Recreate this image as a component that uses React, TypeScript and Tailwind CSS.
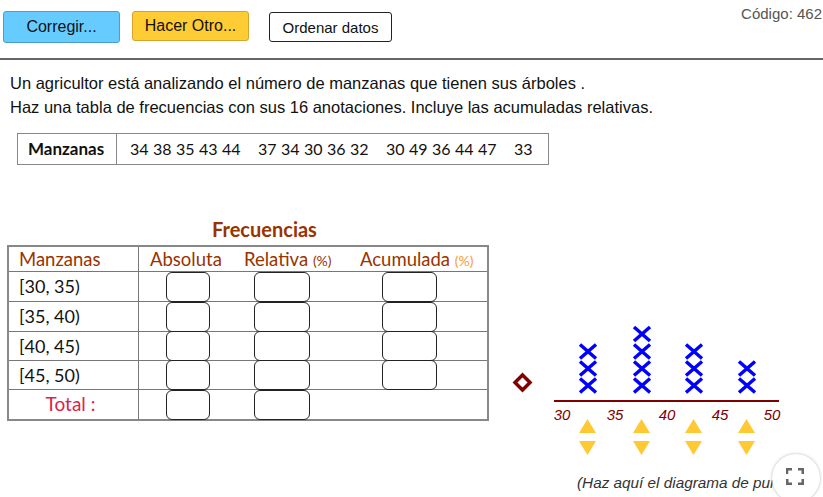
import React from "react";

const Box = ({ w }: { w: string }) => (
  <div className={`${w} h-[30px] shrink-0 rounded-[6px] border-[1.5px] border-[#222] bg-white`} />
);

const rows = ["[30, 35)", "[35, 40)", "[40, 45)", "[45, 50)"];
const rowH = ["h-[30px]", "h-[30px]", "h-[29px]", "h-[29px]"];

const groups = [
  ["34", "38", "35", "43", "44"],
  ["37", "34", "30", "36", "32"],
  ["30", "49", "36", "44", "47"],
  ["33"],
];

function DotPlot() {
  const cols = [
    { x: 588, n: 3 },
    { x: 642, n: 4 },
    { x: 694, n: 3 },
    { x: 747, n: 2 },
  ];
  const ys = [387.5, 370.5, 353.5, 336];
  const labels = [
    { t: "30", x: 562 },
    { t: "35", x: 615 },
    { t: "40", x: 667 },
    { t: "45", x: 720 },
    { t: "50", x: 772 },
  ];
  return (
    <svg width="334" height="253" viewBox="489 219 334 253" className="block">
      <polygon
        points="522.5,377 530,384.5 522.5,392 515,384.5"
        fill="white"
        stroke="#800000"
        strokeWidth="3.5"
      />
      <line x1="554" y1="403" x2="779" y2="403" stroke="#800000" strokeWidth="2" />
      {cols.map((c) =>
        ys.slice(0, c.n).map((y, i) => (
          <g key={`${c.x}-${i}`} stroke="#0000ff" strokeWidth="3.5">
            <line x1={c.x - 8} y1={y - 7} x2={c.x + 8} y2={y + 7} />
            <line x1={c.x - 8} y1={y + 7} x2={c.x + 8} y2={y - 7} />
          </g>
        ))
      )}
      {labels.map((l) => (
        <text
          key={l.t}
          x={l.x}
          y="422"
          textAnchor="middle"
          fill="#800000"
          fontStyle="italic"
          fontSize="15"
          fontFamily="'Liberation Sans', Arial, sans-serif"
        >
          {l.t}
        </text>
      ))}
      {cols.map((c) => (
        <g key={`t${c.x}`} fill="#ffc933">
          <polygon points={`${c.x - 0.5},421 ${c.x + 8},435 ${c.x - 9},435`} />
          <polygon points={`${c.x - 9},443 ${c.x + 8},443 ${c.x - 0.5},457`} />
        </g>
      ))}
    </svg>
  );
}

export default function App() {
  return (
    <div className="relative w-[823px] h-[497px] overflow-hidden bg-white font-['Liberation_Sans',Arial,sans-serif] text-black">
      {/* top bar */}
      <div className="flex items-start h-[60px] border-b-2 border-[#666]">
        <button className="ml-[3px] mt-[11px] w-[117px] h-[32px] rounded-[3px] border border-[#4a9fd0] bg-[#66ccff] text-[16px] leading-none text-[#111]">
          Corregir...
        </button>
        <button className="ml-[12px] mt-[11px] w-[117px] h-[30px] rounded-[3px] border border-[#d4a52a] bg-[#ffcc33] text-[16px] leading-none text-[#111]">
          Hacer Otro...
        </button>
        <button className="ml-[20px] mt-[12px] w-[123px] h-[30px] rounded-[3px] border border-[#222] bg-white text-[15px] leading-none text-[#111]">
          Ordenar datos
        </button>
        <div className="ml-auto mt-[3px] pr-[1px] text-[15px] text-[#555]">Código: 462</div>
      </div>

      {/* statement */}
      <div className="mt-[11px] pl-[10px] text-[16.5px] leading-[24px] text-[#111]">
        <p>Un agricultor está analizando el número de manzanas que tienen sus árboles .</p>
        <p>Haz una tabla de frecuencias con sus 16 anotaciones. Incluye las acumuladas relativas.</p>
      </div>

      {/* data table */}
      <div className="ml-[17px] mt-[14px] w-[532px] h-[32px] flex border border-[#888] font-['Lato',sans-serif] text-[16px] text-[#111]">
        <div className="w-[99px] border-r border-[#888] flex items-center pl-[10px] text-[17px] font-bold">Manzanas</div>
        <div className="flex items-center pl-[13px]">
          {groups.map((g, gi) => (
            <div key={gi} className={`flex gap-[6px] ${gi < 3 ? "w-[128px]" : ""}`}>
              {g.map((n, i) => (
                <span key={i} className="w-[17px] text-center">
                  {n}
                </span>
              ))}
            </div>
          ))}
        </div>
      </div>

      {/* frequencies section */}
      <div className="mt-[52px] flex items-start">
        <div className="ml-[7px] w-[482px] font-['Lato',sans-serif]">
          <div className="h-[28px] leading-[24px] pl-[205px] text-[20px] font-bold text-[#993300]">Frecuencias</div>
          <div className="border-2 border-[#888]">
            {/* header */}
            <div className="flex h-[25px] border-b border-[#777] text-[18.5px] leading-[24px] text-[#993300]">
              <div className="w-[130px] border-r border-[#777] pl-[10px]">Manzanas</div>
              <div className="w-[94px] pl-[11px] whitespace-nowrap">Absoluta</div>
              <div className="w-[117px] pl-[11px] whitespace-nowrap">
                Relativa <span className="text-[14px]">(%)</span>
              </div>
              <div className="flex-1 pl-[10px] whitespace-nowrap">
                Acumulada <span className="text-[14px] text-[#ff9933]">(%)</span>
              </div>
            </div>
            {rows.map((r, i) => (
              <div key={r} className={`flex ${rowH[i]} border-b border-[#777]`}>
                <div className="w-[130px] border-r border-[#777] pl-[10px] flex items-center text-[18px] text-[#111]">
                  {r}
                </div>
                <div className="w-[98px] flex items-center justify-center">
                  <Box w="w-[44px]" />
                </div>
                <div className="w-[90px] flex items-center justify-center">
                  <Box w="w-[56px]" />
                </div>
                <div className="flex-1 flex items-center justify-center pl-[4px]">
                  <Box w="w-[55px]" />
                </div>
              </div>
            ))}
            <div className="flex h-[29px]">
              <div className="w-[130px] border-r border-[#777] flex items-center justify-center pr-[6px] text-[19px] text-[#e0204a]">
                Total :
              </div>
              <div className="w-[98px] flex items-center justify-center">
                <Box w="w-[44px]" />
              </div>
              <div className="w-[90px] flex items-center justify-center">
                <Box w="w-[56px]" />
              </div>
              <div className="flex-1" />
            </div>
          </div>
        </div>
        <div className="flex flex-col">
          <DotPlot />
          <div className="mt-[4px] ml-[88px] whitespace-nowrap text-[15.3px] leading-[18px] italic text-[#333]">
            (Haz aquí el diagrama de puntos)
          </div>
        </div>
      </div>

      {/* fullscreen button */}
      <div className="absolute left-[772px] top-[454px] w-[48px] h-[48px] rounded-full bg-white shadow-[0_0_3px_rgba(0,0,0,0.3)] flex items-center justify-center">
        <svg width="18" height="17" viewBox="0 0 18 17" className="-mt-[3px] -ml-[2px]">
          <g fill="none" stroke="#666" strokeWidth="2.5">
            <path d="M1 6V1.25H6" />
            <path d="M12 1.25H16.75V6" />
            <path d="M16.75 11V15.75H12" />
            <path d="M6 15.75H1.25V11" />
          </g>
        </svg>
      </div>
    </div>
  );
}
